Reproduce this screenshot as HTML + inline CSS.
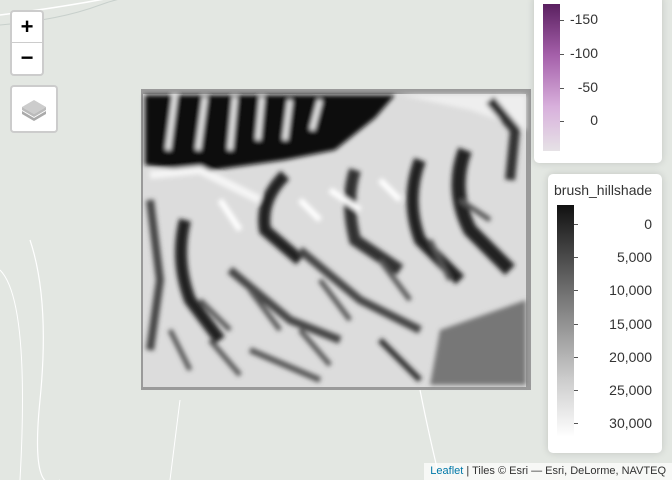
<!DOCTYPE html>
<html><head><meta charset="utf-8"><style>
body{margin:0;width:672px;height:480px;overflow:hidden;background:#e3e7e2;font-family:"Liberation Sans",sans-serif;position:relative}
.ab{position:absolute}
.btn{background:#fff;border:2px solid rgba(0,0,0,0.2);border-radius:4px}
.lg{background:#fff;border-radius:5px;box-shadow:0 0 8px rgba(0,0,0,0.15)}
.lab{position:absolute;font-size:14px;color:#333;text-align:right}
.tk{position:absolute;width:4px;height:1px;background:#555}
</style></head><body>
<svg class="ab" style="left:0;top:0" width="672" height="480">
<path d="M0 15 Q40 10 70 5 T110 -2" stroke="#fff" stroke-width="1.5" fill="none"/>
<path d="M0 25 Q60 20 100 5 T180 -2" stroke="#c8d0cc" stroke-width="1" fill="none"/>
<path d="M30 240 Q50 300 40 400 T60 480" stroke="#fff" stroke-width="1.2" fill="none"/>
<path d="M0 270 Q30 300 20 480" stroke="#fff" stroke-width="1" fill="none"/>
<path d="M420 390 Q430 440 440 480" stroke="#fff" stroke-width="1.2" fill="none"/>
<path d="M180 400 Q175 440 170 480" stroke="#fff" stroke-width="1" fill="none"/>
<defs><filter id="b"><feGaussianBlur stdDeviation="2.5"/></filter></defs>
<rect x="141" y="89" width="390" height="301" fill="#9a9a9a"/>
<rect x="143" y="94" width="383" height="293" fill="#dcdcdc"/>
<g filter="url(#b)">
<polygon points="145,95 395,95 375,118 335,150 285,160 200,172 145,165" fill="#111"/>
<polygon points="400,95 526,95 526,130 470,110" fill="#eee"/>
<path d="M175 95 L168 150 M205 97 L198 150 M235 97 L230 150 M262 97 L258 140 M290 100 L285 140 M320 100 L312 130" stroke="#eee" stroke-width="5" fill="none"/>
<path d="M150 175 L200 170 L260 200" stroke="#f5f5f5" stroke-width="8" fill="none"/>
<path d="M285 175 Q260 200 265 230 L300 260" stroke="#222" stroke-width="12" fill="none"/>
<path d="M355 170 Q345 200 355 240 L400 270" stroke="#333" stroke-width="12" fill="none"/>
<path d="M420 160 Q405 200 420 240 L460 280" stroke="#222" stroke-width="12" fill="none"/>
<path d="M465 150 Q450 190 470 230 L510 270" stroke="#222" stroke-width="14" fill="none"/>
<path d="M185 220 Q175 260 190 300 L220 340" stroke="#222" stroke-width="12" fill="none"/>
<path d="M150 200 L160 280 L150 350" stroke="#444" stroke-width="8" fill="none"/>
<path d="M230 270 L290 320 L340 340" stroke="#444" stroke-width="8" fill="none"/>
<path d="M300 250 L360 300 L420 330" stroke="#444" stroke-width="8" fill="none"/>
<path d="M250 350 L320 380" stroke="#555" stroke-width="6" fill="none"/>
<path d="M440 330 L526 300 L526 385 L430 385 Z" fill="#777"/>
<path d="M380 340 L420 380" stroke="#333" stroke-width="6" fill="none"/>
<path d="M490 100 L515 130 L510 180" stroke="#333" stroke-width="10" fill="none"/>
<path d="M200 300 L230 330 M250 290 L280 330 M320 280 L350 320 M380 260 L410 300 M430 240 L450 280 M170 330 L190 370 M210 340 L240 375 M300 330 L330 365 M460 200 L490 220" stroke="#555" stroke-width="5" fill="none"/>
<path d="M330 190 L360 210 M380 180 L400 200 M300 200 L320 220 M220 200 L240 230" stroke="#fff" stroke-width="6" fill="none"/>
</g>
</svg>
<div class="ab btn" style="left:10px;top:10px;width:30px;height:62px">
<div style="height:30px;border-bottom:1px solid #ccc;text-align:center;font:bold 22px/30px 'Liberation Sans',sans-serif;color:#000">+</div>
<div style="text-align:center;font:bold 22px/30px 'Liberation Sans',sans-serif;color:#000">−</div></div>
<div class="ab btn" style="left:10px;top:85px;width:44px;height:44px">
<svg width="44" height="44"><polygon points="22,13 34,20 22,27 10,20" fill="#ccc"/><polygon points="10,24 22,31 34,24 34,27 22,34 10,27" fill="#aaa"/><polygon points="10,20 22,27 34,20 34,23 22,30 10,23" fill="#bbb"/></svg></div>
<div class="ab lg" style="left:534px;top:-5px;width:128px;height:168px">
<div class="ab" style="left:9px;top:9px;width:17px;height:147px;background:linear-gradient(#5a2060,#a560aa 35%,#d8b0dc 70%,#e6e2e6)"></div>
<div class="tk" style="left:26px;top:25px"></div><div class="tk" style="left:26px;top:59px"></div><div class="tk" style="left:26px;top:93px"></div><div class="tk" style="left:26px;top:126px"></div>
<div class="lab" style="left:28px;width:36px;top:16px">-150</div>
<div class="lab" style="left:28px;width:36px;top:50px">-100</div>
<div class="lab" style="left:28px;width:36px;top:84px">-50</div>
<div class="lab" style="left:28px;width:36px;top:117px">0</div>
</div>
<div class="ab lg" style="left:548px;top:174px;width:114px;height:279px">
<div class="ab" style="left:6px;top:8px;font-size:14px;color:#333">brush_hillshade</div>
<div class="ab" style="left:9px;top:31px;width:17px;height:232px;background:linear-gradient(#111,#777 40%,#ccc 75%,#fff)"></div>
<div class="tk" style="left:26px;top:50px"></div><div class="tk" style="left:26px;top:83px"></div><div class="tk" style="left:26px;top:116px"></div><div class="tk" style="left:26px;top:150px"></div><div class="tk" style="left:26px;top:183px"></div><div class="tk" style="left:26px;top:216px"></div><div class="tk" style="left:26px;top:249px"></div>
<div class="lab" style="left:28px;width:76px;top:42px">0</div>
<div class="lab" style="left:28px;width:76px;top:75px">5,000</div>
<div class="lab" style="left:28px;width:76px;top:108px">10,000</div>
<div class="lab" style="left:28px;width:76px;top:142px">15,000</div>
<div class="lab" style="left:28px;width:76px;top:175px">20,000</div>
<div class="lab" style="left:28px;width:76px;top:208px">25,000</div>
<div class="lab" style="left:28px;width:76px;top:241px">30,000</div>
</div>
<div class="ab" style="right:0;bottom:0;height:17px;padding:0 6px;background:rgba(255,255,255,0.7);font-size:11px;line-height:17px;color:#333">
<span style="color:#0078a8">Leaflet</span> | Tiles © Esri — Esri, DeLorme, NAVTEQ</div>
</body></html>
